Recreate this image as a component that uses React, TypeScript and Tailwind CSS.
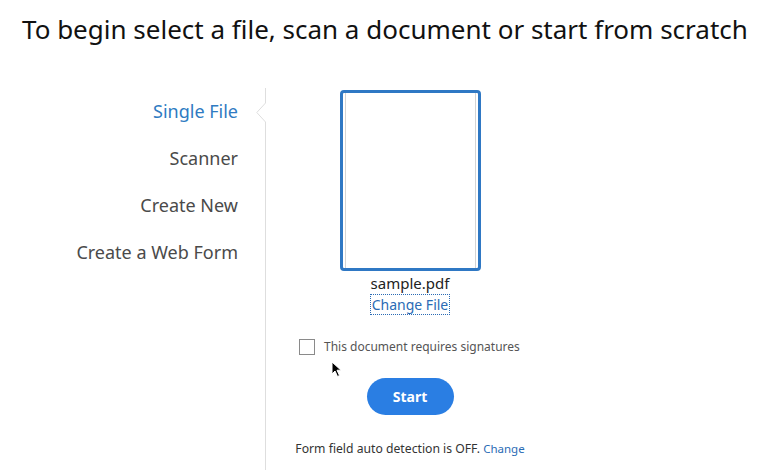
import React from "react";

const navItems = ["Single File", "Scanner", "Create New", "Create a Web Form"];

const App = () => {
  return (
    <div
      className="w-[783px] h-[470px] bg-white overflow-hidden relative"
      style={{ fontFamily: "'Noto Sans', 'Open Sans', sans-serif" }}
    >
      <div className="h-[88px] pl-[22px] pt-[12px]">
        <span className="text-[26px] leading-[35px] text-[#111]">
          To begin select a file, scan a document or start from scratch
        </span>
      </div>

      <div className="flex h-[382px]">
        {/* left nav */}
        <div className="w-[256px] flex flex-col items-end pr-[18px]">
          {navItems.map((item, i) => (
            <div
              key={item}
              className={
                i === 0
                  ? "h-[47px] flex items-center text-[18px] text-[#2f7bc2]"
                  : "h-[47px] flex items-center text-[18px] text-[#4a4a4a]"
              }
            >
              {item}
            </div>
          ))}
        </div>

        {/* divider with notch */}
        <div className="w-[10px] flex flex-col">
          <div className="h-[15px] border-r border-[#dedede]"></div>
          <svg width="10" height="19" viewBox="0 0 10 19" className="block">
            <path d="M9.5 0 L0.8 9.5 L9.5 19" fill="none" stroke="#dedede" strokeWidth="1" />
          </svg>
          <div className="flex-1 border-r border-[#dedede]"></div>
        </div>

        {/* right panel */}
        <div className="pl-[29px]">
          <div className="w-[230px] flex flex-col items-center">
            <div className="mt-[2px] w-[141px] h-[181px] border-[3px] border-[#2f78c4] rounded-[4px] bg-white flex px-[2px]">
              <div className="flex-1 border-l border-r border-[#d4d4d4]"></div>
            </div>
            <span className="mt-[2px] text-[15px] leading-[20px] text-[#222]">sample.pdf</span>
            <span className="mt-[1px] px-[1px] text-[14px] leading-[19px] text-[#2a6bb5] border border-dotted border-[#2a6bb5]">
              Change File
            </span>

            <div className="mt-[24px] w-full flex items-center pl-[4px] whitespace-nowrap">
              <div className="w-[16px] h-[16px] shrink-0 border border-[#8a8a8a] bg-white"></div>
              <span className="ml-[9px] text-[12px] leading-[16px] text-[#555]">
                This document requires signatures
              </span>
            </div>

            <button className="mt-[23px] w-[87px] h-[37px] rounded-full bg-[#2a7ee3] text-white text-[14px] font-bold">
              Start
            </button>

            <div className="mt-[25px] whitespace-nowrap text-[12.2px] leading-[18px] text-[#333]">
              Form field auto detection is OFF.{" "}
              <span className="text-[11.5px] text-[#2a6bb5]">Change</span>
            </div>
          </div>
        </div>
      </div>

      {/* mouse cursor */}
      <svg width="12" height="17" viewBox="0 0 12 17" className="absolute left-[331px] top-[361px]">
        <path d="M1 1 L1 13 L4 10 L6.5 15.5 L8.5 14.5 L6 9.2 L10 9.2 Z" fill="#000" stroke="#fff" strokeWidth="1" />
      </svg>
    </div>
  );
};

export default App;
